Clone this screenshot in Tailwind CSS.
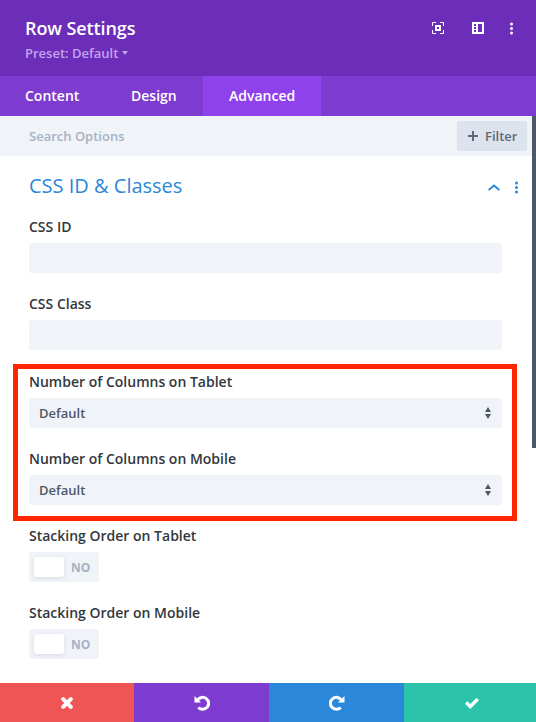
<!DOCTYPE html>
<html lang="en">
<head>
<meta charset="utf-8">
<title>Row Settings</title>
<script src="https://cdn.jsdelivr.net/npm/@tailwindcss/browser@4"></script>
</head>
<body class="bg-white">
<div class="relative flex h-[722px] w-[536px] flex-col overflow-hidden bg-white font-['Open_Sans','Noto_Sans',sans-serif] font-semibold">
  <header class="flex h-[76px] shrink-0 items-start justify-between bg-[#6c2eb9] pl-[25px] pr-[23px]">
    <div class="pt-[15px]">
      <h1 class="text-[18px] leading-[27px] font-semibold tracking-[-0.1px] text-white">Row Settings</h1>
      <div class="flex items-center gap-[4px] text-[13px] leading-[22px] font-semibold text-[#c5a3ef]">
        <span>Preset: Default</span>
        <svg class="h-[4px] w-[6px]" viewBox="0 0 6 4" fill="currentColor"><path d="M0 0h6L3 4z"/></svg>
      </div>
    </div>
    <div class="flex items-start pt-[22px] text-white">
      <svg class="mr-[28px] h-[12px] w-[12px]" viewBox="0 0 12 12" fill="none" stroke="currentColor"><path d="M.5 4V.5H4M8 .5h3.500V4M11.500 8v3.500H8M4 11.500H.5V8"/><path d="M4 4h4v4H4z" stroke-width="2"/></svg>
      <svg class="mr-[26px] h-[12px] w-[12px]" viewBox="0 0 12 12" fill="currentColor" fill-rule="evenodd"><path d="M.5 0h11a.5.5 0 0 1 .5.5v11a.5.5 0 0 1-.5.5H.5a.5.5 0 0 1-.5-.5V.5A.5.5 0 0 1 .5 0zM2 2v2h2V2zM2 5v2h2V5zM2 8v2h2V8zM6 2v8h4V2z"/></svg>
      <svg class="h-[13px] w-[3px]" viewBox="0 0 3 13" fill="currentColor"><circle cx="1.500" cy="2" r="1.500"/><circle cx="1.500" cy="6.500" r="1.500"/><circle cx="1.500" cy="11" r="1.500"/></svg>
    </div>
  </header>
  <nav class="flex h-[40px] shrink-0 bg-[#7e3bd0] text-[14px] leading-[40px] text-white">
    <div class="w-[105px] pl-[25px]">Content</div>
    <div class="w-[98px] pl-[26px]">Design</div>
    <div class="w-[118px] bg-[#8f42ec] pl-[26px]">Advanced</div>
  </nav>
  <main class="flex min-h-0 flex-1 items-start justify-between">
    <div class="w-[532px]">
      <div class="flex h-[40px] items-center justify-between bg-[#f0f3f8] pl-[29px] pr-[5px]">
        <span class="pt-[2px] text-[13px] text-[#a5b2c3]">Search Options</span>
        <div class="flex h-[30px] w-[70px] items-center gap-[7px] rounded-[3px] bg-[#dde3ec] pl-[11px] text-[13px] text-[#5c6978]">
          <svg class="h-[10px] w-[10px]" viewBox="0 0 10 10" stroke="currentColor" stroke-width="2"><path d="M5 0v10M0 5h10"/></svg>
          <span class="pt-px">Filter</span>
        </div>
      </div>
      <div class="flex h-[61px] items-center justify-between pl-[29px] pr-[14px] text-[#2b87da]">
        <h2 class="pb-[2px] text-[20px] leading-[28px] font-normal">CSS ID &amp; Classes</h2>
        <div class="flex items-center gap-[15px] pt-[2px]">
          <svg class="h-[7px] w-[12px]" viewBox="0 0 12 7" fill="none" stroke="currentColor" stroke-width="2"><path d="M.7 6 6 1.500 11.300 6"/></svg>
          <svg class="h-[13px] w-[3px]" viewBox="0 0 3 13" fill="currentColor"><circle cx="1.500" cy="2" r="1.500"/><circle cx="1.500" cy="6.500" r="1.500"/><circle cx="1.500" cy="11" r="1.500"/></svg>
        </div>
      </div>
      <div class="flex flex-col gap-[21px] pl-[29px] text-[14px] text-[#32373c]">
        <div>
          <div class="leading-[20px]">CSS ID</div>
          <div class="mt-[6px] h-[30px] w-[473px] rounded-[3px] bg-[#f0f3f8]"></div>
        </div>
        <div class="mb-px">
          <div class="leading-[20px]">CSS Class</div>
          <div class="mt-[6px] h-[30px] w-[473px] rounded-[3px] bg-[#f0f3f8]"></div>
        </div>
        <div>
          <div class="leading-[20px]">Number of Columns on Tablet</div>
          <div class="mt-[6px] flex h-[30px] w-[473px] items-center justify-between rounded-[3px] bg-[#f0f3f8] pl-[10px] pr-[11px] text-[13px] text-[#4c5866]">
            <span class="pt-px">Default</span>
            <svg class="h-[12px] w-[6px]" viewBox="0 0 6 12" fill="currentColor"><path d="M0 5 3 0l3 5zM0 7h6l-3 5z"/></svg>
          </div>
        </div>
        <div>
          <div class="leading-[20px]">Number of Columns on Mobile</div>
          <div class="mt-[6px] flex h-[30px] w-[473px] items-center justify-between rounded-[3px] bg-[#f0f3f8] pl-[10px] pr-[11px] text-[13px] text-[#4c5866]">
            <span class="pt-px">Default</span>
            <svg class="h-[12px] w-[6px]" viewBox="0 0 6 12" fill="currentColor"><path d="M0 5 3 0l3 5zM0 7h6l-3 5z"/></svg>
          </div>
        </div>
        <div>
          <div class="leading-[20px]">Stacking Order on Tablet</div>
          <div class="mt-[6px] flex h-[30px] w-[70px] items-center gap-[7px] rounded-[3px] bg-[#f0f3f8] pl-[5px] text-[12px] font-bold text-[#a5b2c3]">
            <span class="h-[20px] w-[30px] rounded-[3px] bg-white shadow-[0_1px_4px_rgba(43,60,90,0.12)]"></span>
            <span class="pt-[2px]">NO</span>
          </div>
        </div>
        <div>
          <div class="leading-[20px]">Stacking Order on Mobile</div>
          <div class="mt-[6px] flex h-[30px] w-[70px] items-center gap-[7px] rounded-[3px] bg-[#f0f3f8] pl-[5px] text-[12px] font-bold text-[#a5b2c3]">
            <span class="h-[20px] w-[30px] rounded-[3px] bg-white shadow-[0_1px_4px_rgba(43,60,90,0.12)]"></span>
            <span class="pt-[2px]">NO</span>
          </div>
        </div>
      </div>
    </div>
    <div class="h-[332px] w-[4px] bg-[#4c5866]"></div>
  </main>
  <footer class="grid h-[39px] shrink-0 grid-cols-[134px_135px_135px_132px] text-white">
    <div class="flex items-center justify-center bg-[#ef5555]">
      <svg class="h-[12px] w-[12px]" viewBox="0 0 12 12" stroke="currentColor" stroke-width="4" stroke-linecap="round"><path d="m2.200 2.200 7.600 7.600M9.800 2.200 2.200 9.800"/></svg>
    </div>
    <div class="flex items-center justify-center bg-[#7e3bd0]">
      <svg class="h-[16px] w-[16px]" viewBox="0 0 16 16" fill="none" stroke="currentColor"><path d="M3.600 5A6 6 0 1 1 4.300 12.500" stroke-width="3"/><path d="M.5 1v6.500H7z" fill="currentColor" stroke="none"/></svg>
    </div>
    <div class="flex items-center justify-center bg-[#2b87da]">
      <svg class="h-[16px] w-[16px]" viewBox="0 0 16 16" fill="none" stroke="currentColor"><path d="M12.400 5A6 6 0 1 0 11.700 12.500" stroke-width="3"/><path d="M15.500 1v6.500H9z" fill="currentColor" stroke="none"/></svg>
    </div>
    <div class="flex items-center justify-center bg-[#2bc4ab] pl-[4px]">
      <svg class="h-[12px] w-[14px]" viewBox="0 0 14 12" fill="none" stroke="currentColor" stroke-width="3.400"><path d="M1.200 5.500 5.300 9.500 12.800 2"/></svg>
    </div>
  </footer>
  <div class="pointer-events-none absolute left-[13px] top-[364px] h-[157px] w-[504px] border-5 border-[#fe2600]"></div>
</div>
</body>
</html>
